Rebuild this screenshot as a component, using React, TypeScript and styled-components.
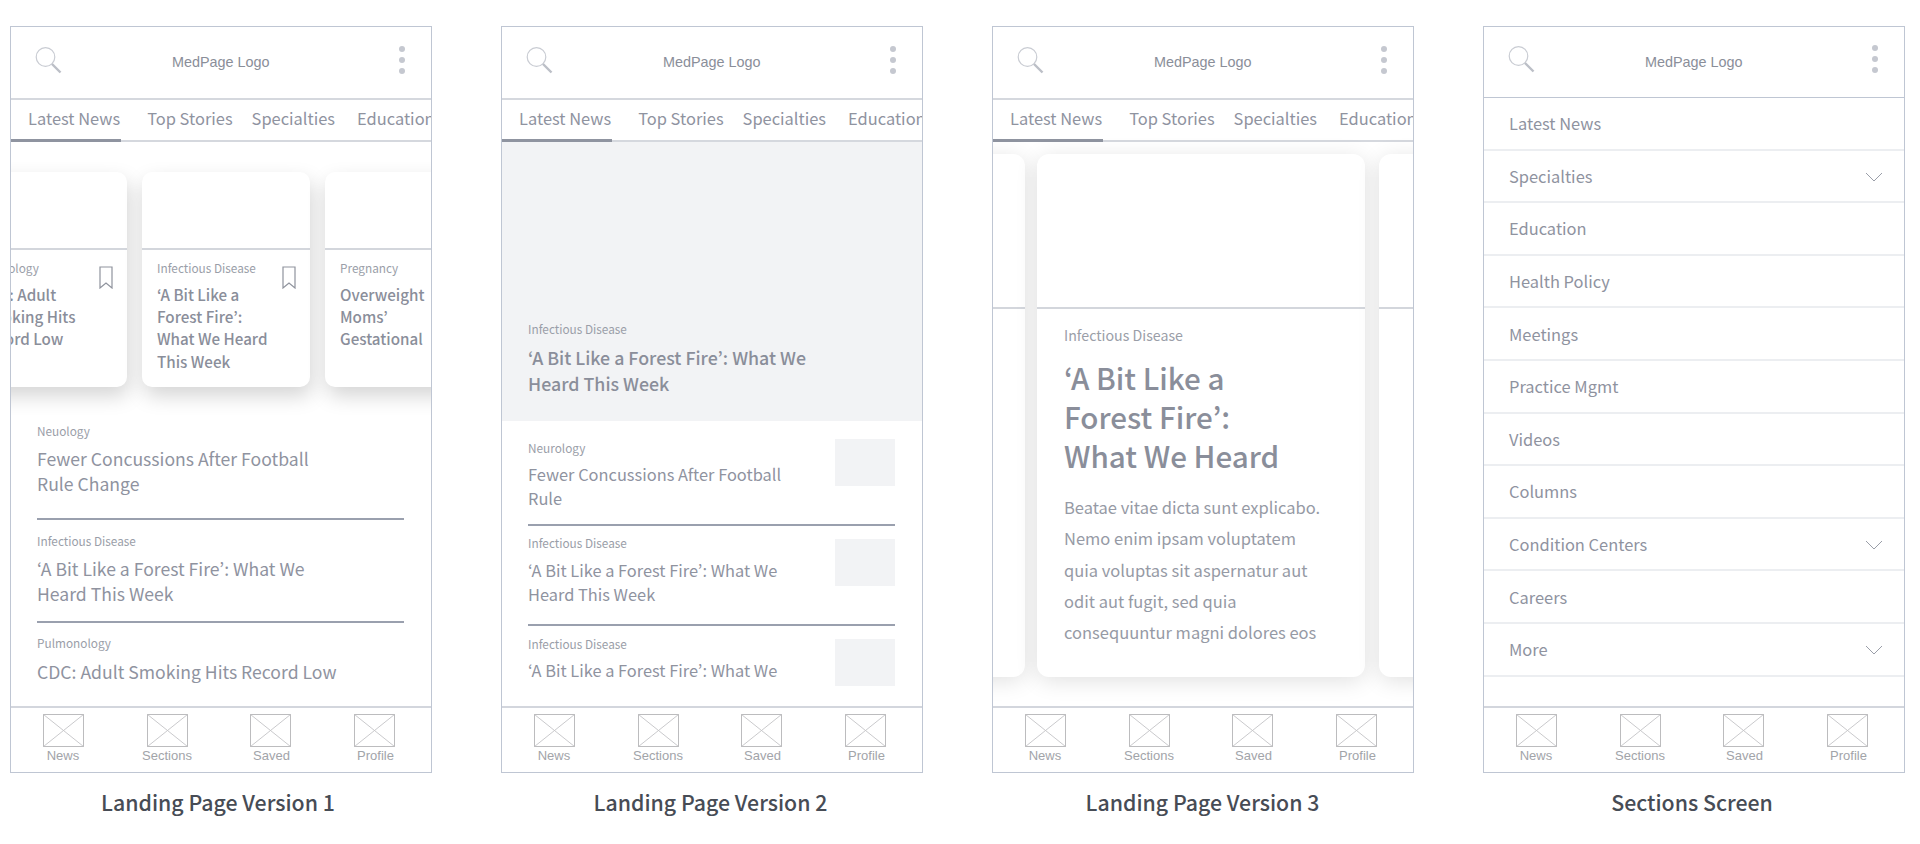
import React from "react";
import styled, { createGlobalStyle } from "styled-components";

const SANS = `"Noto Sans CJK JP", "Source Sans Pro", "Noto Sans", sans-serif`;
const ARIAL = `"Liberation Sans", Arial, sans-serif`;

const GlobalStyle = createGlobalStyle`
  html, body {
    margin: 0;
    padding: 0;
    background: #ffffff;
  }
  * {
    box-sizing: border-box;
  }
`;

const Page = styled.div`
  display: flex;
  gap: 69px;
  width: 1920px;
  height: 844px;
  padding: 26px 0 0 10px;
  overflow: hidden;
`;

const Column = styled.section`
  display: flex;
  flex-direction: column;
  width: 422px;
`;

const Frame = styled.div`
  display: flex;
  flex-direction: column;
  height: 747px;
  border: 1px solid #bfc6d3;
  overflow: hidden;
`;

const Caption = styled.h2<{ $nudge: number }>`
  margin: 16px 0 0;
  padding-right: ${(p) => p.$nudge}px;
  font: 500 21.3px/26px ${SANS};
  color: #474c55;
  text-align: center;
`;

const TopBar = styled.header<{ $height: number }>`
  flex: none;
  display: grid;
  grid-template-columns: 1fr auto 1fr;
  align-items: center;
  height: ${(p) => p.$height}px;
  padding: 0 26px 0 24px;
`;

const Logo = styled.div`
  padding: 0 0 1px 1.5px;
  font: 14.4px/18px ${ARIAL};
  color: #8a8e99;
`;

const Dots = styled.div`
  justify-self: end;
  display: flex;
  flex-direction: column;
  gap: 5px;
  margin-top: -6px;
  i {
    display: block;
    width: 6px;
    height: 6px;
    border-radius: 50%;
    background: #c5c8d0;
  }
`;

const Tabs = styled.nav`
  flex: none;
  display: flex;
  height: 44px;
  border-top: 2px solid #d5d8de;
  box-shadow: inset 0 -2px 0 #d5d8de;
  white-space: nowrap;
  overflow: hidden;
`;

const Tab = styled.div<{ $active?: boolean; $gap: number }>`
  flex: none;
  height: 42px;
  margin-left: ${(p) => p.$gap}px;
  padding: ${(p) => (p.$active ? "0 1px 0 17px" : "0")};
  border-bottom: 3px solid ${(p) => (p.$active ? "#8f94a0" : "transparent")};
  font: 16.45px/36px ${SANS};
  color: #8f939f;
`;

const Carousel = styled.div<{ $top: number; $bottom: number; $gap: number }>`
  flex: none;
  position: relative;
  display: flex;
  gap: ${(p) => p.$gap}px;
  padding: ${(p) => p.$top}px 0 ${(p) => p.$bottom}px;
`;

const SmallCard = styled.article<{ $offset?: number }>`
  flex: none;
  width: 168px;
  height: 215px;
  margin-left: ${(p) => p.$offset ?? 0}px;
  border-radius: 10px;
  background: #ffffff;
  box-shadow: 2px 9px 20px rgba(0, 0, 0, 0.17);
`;

const SmallCardImage = styled.div`
  height: 78px;
  border-bottom: 2px solid #d3d6dc;
`;

const SmallCardBody = styled.div<{ $inset: number }>`
  display: flex;
  justify-content: space-between;
  padding: 8px 14px 0 ${(p) => p.$inset}px;
`;

const Label = styled.div<{ $size?: number }>`
  font: ${(p) => p.$size ?? 11.8}px/20px ${SANS};
  color: #9a9ea8;
`;

const SmallCardTitle = styled.h3`
  margin: 5px 0 0;
  font: 500 15.2px/22.2px ${SANS};
  color: #8a8e9a;
  white-space: pre-line;
`;

const Bookmark = styled.svg`
  flex: none;
  margin-top: 8px;
`;

const Content = styled.div`
  flex: 1;
  min-height: 0;
`;

const TextList = styled.div`
  padding: 0 27px 0 26px;
`;

const TextRow = styled.article<{ $rule?: boolean; $height: number; $pad: number }>`
  height: ${(p) => p.$height}px;
  padding-top: ${(p) => p.$pad}px;
  border-bottom: ${(p) => (p.$rule ? "2px solid #9aa0ae" : "none")};
`;

const TextTitle = styled.h3<{ $top: number }>`
  margin: ${(p) => p.$top}px 0 0;
  font: 400 17.6px/25px ${SANS};
  color: #8f939f;
  white-space: pre-line;
`;

const Hero = styled.div`
  height: 279px;
  padding: 177px 0 0 26px;
  background: #f2f3f5;
`;

const HeroTitle = styled.h3`
  margin: 6px 0 0;
  font: 500 17.8px/25.8px ${SANS};
  color: #8a8e9a;
  white-space: pre-line;
`;

const ThumbList = styled.div`
  padding: 0 27px 0 26px;
`;

const ThumbRow = styled.article<{ $rule?: boolean; $height: number; $pad: number }>`
  display: flex;
  justify-content: space-between;
  height: ${(p) => p.$height}px;
  padding-top: ${(p) => p.$pad}px;
  border-bottom: ${(p) => (p.$rule ? "2px solid #9aa0ae" : "none")};
`;

const ThumbTitle = styled.h3<{ $top: number }>`
  margin: ${(p) => p.$top}px 0 0;
  font: 400 16.4px/23.6px ${SANS};
  color: #8f939f;
  white-space: pre-line;
`;

const Thumb = styled.div<{ $top: number }>`
  flex: none;
  width: 60px;
  height: 47px;
  margin-top: ${(p) => p.$top}px;
  background: #f2f3f5;
`;

const BigCard = styled.article<{ $offset?: number }>`
  flex: none;
  width: 328px;
  height: 523px;
  margin-left: ${(p) => p.$offset ?? 0}px;
  border-radius: 12px;
  background: #ffffff;
  box-shadow: 0 4px 22px rgba(0, 0, 0, 0.12);
`;

const BigCardImage = styled.div`
  height: 155px;
  border-bottom: 2px solid #d3d6dc;
`;

const BigCardBody = styled.div`
  padding: 16px 0 0 27px;
`;

const BigCardTitle = styled.h3`
  margin: 12.7px 0 0;
  font: 500 29.6px/39px ${SANS};
  color: #8a8e9a;
  white-space: pre-line;
`;

const BigCardText = styled.p`
  margin: 17px 0 0;
  font: 400 16.5px/31.4px ${SANS};
  color: #969aa5;
  white-space: pre-line;
`;

const Menu = styled.ul`
  flex: 1;
  min-height: 0;
  margin: 0;
  padding: 0;
  list-style: none;
  border-top: 1px solid #bfc6d3;
`;

const MenuItem = styled.li`
  display: flex;
  align-items: center;
  justify-content: space-between;
  height: 52.6px;
  padding: 0 21px 0 25px;
  border-bottom: 2px solid #eceef1;
  font: 16.45px/24px ${SANS};
  color: #8f939f;
`;

const ChevronIcon = styled.svg`
  margin-top: 2px;
`;

const BottomNav = styled.nav`
  flex: none;
  position: relative;
  z-index: 2;
  display: grid;
  grid-template-columns: 104px 104px 102px 106px;
  justify-items: center;
  height: 66px;
  padding-top: 6px;
  border-top: 2px solid #d3d6dd;
  background: #ffffff;
`;

const NavItem = styled.div`
  display: flex;
  flex-direction: column;
  align-items: center;
`;

const NavLabel = styled.span<{ $nudge: number }>`
  margin-top: 1px;
  padding-left: ${(p) => p.$nudge}px;
  font: 13px/16px ${ARIAL};
  color: #a2a4a9;
`;

const SearchIcon = () => (
  <svg width="30" height="30" viewBox="0 0 30 30" style={{ marginTop: -4 }}>
    <circle cx="10.5" cy="11" r="9.3" fill="none" stroke="#c9ccd3" strokeWidth="1.2" />
    <path d="M17 18 L25.5 26.5" stroke="#bcbfc7" strokeWidth="2.4" fill="none" />
  </svg>
);

const BookmarkIcon = () => (
  <Bookmark width="14" height="23" viewBox="0 0 14 23">
    <path d="M1 1 H13 V22 L7 17 L1 22 Z" fill="none" stroke="#8f939d" strokeWidth="1.2" />
  </Bookmark>
);

const Chevron = () => (
  <ChevronIcon width="18" height="10" viewBox="0 0 18 10">
    <path d="M1 1 L9 9 L17 1" fill="none" stroke="#9a9ea8" strokeWidth="1" />
  </ChevronIcon>
);

const PlaceholderIcon = () => (
  <svg width="41" height="33" viewBox="0 0 41 33">
    <rect x="0.5" y="0.5" width="40" height="32" fill="none" stroke="#bcbcbe" strokeWidth="1" />
    <path d="M0.5 0.5 L40.5 32.5 M40.5 0.5 L0.5 32.5" stroke="#c4c4c6" strokeWidth="0.9" />
  </svg>
);

const Header = ({ height }: { height: number }) => (
  <TopBar $height={height}>
    <SearchIcon />
    <Logo>MedPage Logo</Logo>
    <Dots>
      <i />
      <i />
      <i />
    </Dots>
  </TopBar>
);

const TabBar = () => (
  <Tabs>
    <Tab $active $gap={0}>Latest News</Tab>
    <Tab $gap={26}>Top Stories</Tab>
    <Tab $gap={19}>Specialties</Tab>
    <Tab $gap={22}>Education</Tab>
  </Tabs>
);

const navItems = [
  { label: "News", nudge: 0 },
  { label: "Sections", nudge: 0 },
  { label: "Saved", nudge: 3 },
  { label: "Profile", nudge: 3 },
];

const Footer = () => (
  <BottomNav>
    {navItems.map((item) => (
      <NavItem key={item.label}>
        <PlaceholderIcon />
        <NavLabel $nudge={item.nudge}>{item.label}</NavLabel>
      </NavItem>
    ))}
  </BottomNav>
);

const smallCards = [
  { label: "Cardiology", title: "CDC: Adult\nSmoking Hits\nRecord Low", offset: -52, inset: 20 },
  { label: "Infectious Disease", title: "‘A Bit Like a\nForest Fire’:\nWhat We Heard\nThis Week", inset: 15 },
  { label: "Pregnancy", title: "Overweight\nMoms’\nGestational", inset: 15 },
];

const textRows = [
  { label: "Neuology", title: "Fewer Concussions After Football\nRule Change", height: 99, pad: 0, top: 4.7, rule: true },
  { label: "Infectious Disease", title: "‘A Bit Like a Forest Fire’: What We\nHeard This Week", height: 103, pad: 11, top: 4.5, rule: true },
  { label: "Pulmonology", title: "CDC: Adult Smoking Hits Record Low", height: 80, pad: 10, top: 6 },
];

const thumbRows = [
  { label: "Neurology", title: "Fewer Concussions After Football\nRule", height: 105, pad: 17, thumb: 1, top: 5, rule: true },
  { label: "Infectious Disease", title: "‘A Bit Like a Forest Fire’: What We\nHeard This Week", height: 100, pad: 7, thumb: 6, top: 6, rule: true },
  { label: "Infectious Disease", title: "‘A Bit Like a Forest Fire’: What We", height: 70, pad: 8, thumb: 5, top: 5 },
];

const menuItems = [
  { label: "Latest News" },
  { label: "Specialties", more: true },
  { label: "Education" },
  { label: "Health Policy" },
  { label: "Meetings" },
  { label: "Practice Mgmt" },
  { label: "Videos" },
  { label: "Columns" },
  { label: "Condition Centers", more: true },
  { label: "Careers" },
  { label: "More", more: true },
];

export default function App() {
  return (
    <Page>
      <GlobalStyle />

      <Column>
        <Frame>
          <Header height={71} />
          <TabBar />
          <Content>
            <Carousel $top={30} $bottom={34} $gap={15}>
              {smallCards.map((card) => (
                <SmallCard key={card.label} $offset={card.offset}>
                  <SmallCardImage />
                  <SmallCardBody $inset={card.inset}>
                    <div>
                      <Label>{card.label}</Label>
                      <SmallCardTitle>{card.title}</SmallCardTitle>
                    </div>
                    <BookmarkIcon />
                  </SmallCardBody>
                </SmallCard>
              ))}
            </Carousel>
            <TextList>
              {textRows.map((row) => (
                <TextRow key={row.title} $rule={row.rule} $height={row.height} $pad={row.pad}>
                  <Label>{row.label}</Label>
                  <TextTitle $top={row.top}>{row.title}</TextTitle>
                </TextRow>
              ))}
            </TextList>
          </Content>
          <Footer />
        </Frame>
        <Caption $nudge={6}>Landing Page Version 1</Caption>
      </Column>

      <Column>
        <Frame>
          <Header height={71} />
          <TabBar />
          <Content>
            <Hero>
              <Label>Infectious Disease</Label>
              <HeroTitle>{"‘A Bit Like a Forest Fire’: What We\nHeard This Week"}</HeroTitle>
            </Hero>
            <ThumbList>
              {thumbRows.map((row, i) => (
                <ThumbRow key={i} $rule={row.rule} $height={row.height} $pad={row.pad}>
                  <div>
                    <Label>{row.label}</Label>
                    <ThumbTitle $top={row.top}>{row.title}</ThumbTitle>
                  </div>
                  <Thumb $top={row.thumb} />
                </ThumbRow>
              ))}
            </ThumbList>
          </Content>
          <Footer />
        </Frame>
        <Caption $nudge={3}>Landing Page Version 2</Caption>
      </Column>

      <Column>
        <Frame>
          <Header height={71} />
          <TabBar />
          <Content>
            <Carousel $top={12} $bottom={0} $gap={12}>
              <BigCard $offset={-296}>
                <BigCardImage />
              </BigCard>
              <BigCard>
                <BigCardImage />
                <BigCardBody>
                  <Label $size={14.2}>Infectious Disease</Label>
                  <BigCardTitle>{"‘A Bit Like a\nForest Fire’:\nWhat We Heard"}</BigCardTitle>
                  <BigCardText>
                    {"Beatae vitae dicta sunt explicabo.\nNemo enim ipsam voluptatem\nquia voluptas sit aspernatur aut\nodit aut fugit, sed quia\nconsequuntur magni dolores eos"}
                  </BigCardText>
                </BigCardBody>
              </BigCard>
              <BigCard $offset={2}>
                <BigCardImage />
              </BigCard>
            </Carousel>
          </Content>
          <Footer />
        </Frame>
        <Caption $nudge={1}>Landing Page Version 3</Caption>
      </Column>

      <Column>
        <Frame>
          <Header height={70} />
          <Menu>
            {menuItems.map((item) => (
              <MenuItem key={item.label}>
                {item.label}
                {item.more && <Chevron />}
              </MenuItem>
            ))}
          </Menu>
          <Footer />
        </Frame>
        <Caption $nudge={4}>Sections Screen</Caption>
      </Column>
    </Page>
  );
}
